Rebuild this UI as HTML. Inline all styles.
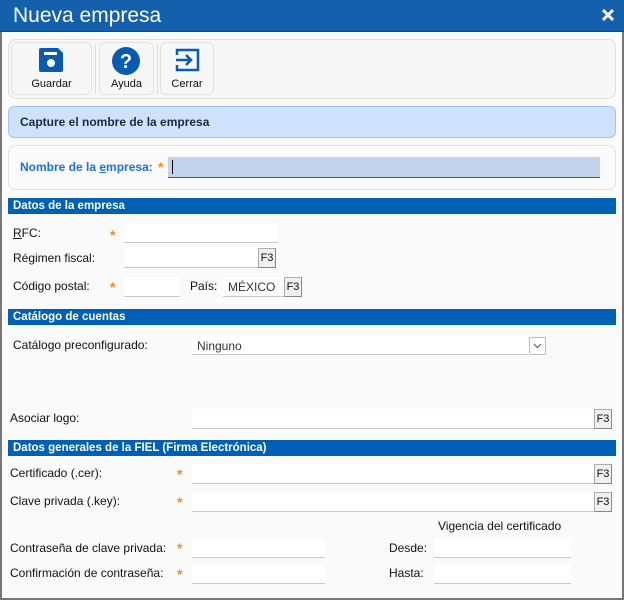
<!DOCTYPE html>
<html><head><meta charset="utf-8"><style>
*{box-sizing:border-box;margin:0;padding:0}
body{width:624px;height:600px;overflow:hidden;background:#fafafa;font-family:"Liberation Sans",Arial,sans-serif;font-size:12px;color:#111;position:relative}
.a{position:absolute}
.win{left:0;top:0;width:624px;height:600px;border:2px solid #777;border-top:none}
.title{left:0;top:0;width:624px;height:32px;background:#1560ad;border-bottom:1px solid #0c4b8c}
.lbl{position:absolute;font-size:12px;white-space:nowrap;line-height:14px}
.inp{position:absolute;background:#fff;border-bottom:1px solid #c8c8c8;height:20px}
.f3{position:absolute;width:18px;height:20px;background:#f0f0f0;border:1px solid #adadad;border-right-color:#888;border-bottom-color:#888;font-size:11px;text-align:center;line-height:18px}
.st{position:absolute;color:#f58a1f;font-size:14px;font-weight:bold;line-height:14px}
.hdr{position:absolute;left:8px;width:608px;height:16px;background:#0060b6;color:#fff;font-weight:bold;font-size:11.5px;line-height:16px;padding-left:5px}
.btn{position:absolute;top:42px;height:53px;border:1px solid #e2e2e2;border-radius:6px;background:#f7f7f7;text-align:center;font-size:11px}
.btn span{position:absolute;left:0;right:0;top:35px}
</style></head><body>
<div class="a win"></div>
<div class="a title"></div>
<div class="a" style="left:13px;top:4px;color:#fff;font-size:21px;line-height:24px">Nueva empresa</div>
<svg class="a" style="left:601px;top:8px" width="14" height="14" viewBox="0 0 14 14"><path d="M2 2L12 12M12 2L2 12" stroke="#fff" stroke-width="3"/></svg>

<div class="a" style="left:8px;top:39px;width:608px;height:60px;border:1px solid #e0e0e0;border-radius:8px;background:#f7f7f7"></div>
<div class="btn" style="left:11px;width:81px"><span>Guardar</span></div>
<div class="btn" style="left:99px;width:55px"><span>Ayuda</span></div>
<div class="btn" style="left:160px;width:54px"><span>Cerrar</span></div>
<div class="a" style="left:95px;top:44px;width:1px;height:50px;background:#ddd"></div>
<div class="a" style="left:157px;top:44px;width:1px;height:50px;background:#ddd"></div>
<svg class="a" style="left:38px;top:47px" width="26" height="26" viewBox="0 0 26 26"><path d="M3 1H20L25 6V23Q25 25 23 25H3Q1 25 1 23V3Q1 1 3 1Z" fill="#0a5bb0"/><rect x="6" y="5" width="13" height="3" fill="#fff"/><circle cx="13" cy="16" r="4" fill="#fff"/></svg>
<svg class="a" style="left:111px;top:46px" width="30" height="30" viewBox="0 0 30 30"><circle cx="15" cy="15" r="14" fill="#0a5bb0"/><text x="15" y="22" text-anchor="middle" fill="#fff" font-family="Liberation Sans" font-weight="bold" font-size="20">?</text></svg>
<svg class="a" style="left:175px;top:48px" width="25" height="24" viewBox="0 0 25 24"><path d="M2 7V2H23V22H2V17" stroke="#0a5bb0" stroke-width="2.5" fill="none"/><path d="M1 12H16M11 7L16 12L11 17" stroke="#0a5bb0" stroke-width="2.5" fill="none"/></svg>

<div class="a" style="left:8px;top:106px;width:608px;height:32px;background:#cfe2fd;border:1px solid #9ec3f7;border-radius:6px"></div>
<div class="lbl" style="left:20px;top:115px;font-weight:bold;color:#1a2a40">Capture el nombre de la empresa</div>

<div class="a" style="left:8px;top:145px;width:608px;height:45px;border:1px solid #e2e2e2;border-radius:8px;background:#fafafa"></div>
<div class="lbl" style="left:20px;top:160px;color:#1e6fe0;font-weight:bold">Nombre de la <u>e</u>mpresa:</div>
<div class="st" style="left:158px;top:160px">*</div>
<div class="a" style="left:168px;top:157px;width:432px;height:21px;background:#c2d2ec;border-bottom:1px solid #1560d0"></div>
<div class="a" style="left:172px;top:160px;width:1px;height:14px;background:#000"></div>

<div class="hdr" style="top:198px">Datos de la empresa</div>
<div class="lbl" style="left:13px;top:226px"><u>R</u>FC:</div>
<div class="st" style="left:110px;top:228px">*</div>
<div class="inp" style="left:124px;top:223px;width:154px"></div>
<div class="lbl" style="left:13px;top:251px">Régimen fiscal:</div>
<div class="inp" style="left:124px;top:248px;width:134px"></div>
<div class="f3" style="left:258px;top:248px">F3</div>
<div class="lbl" style="left:13px;top:279px">Código postal:</div>
<div class="st" style="left:110px;top:280px">*</div>
<div class="inp" style="left:124px;top:277px;width:56px"></div>
<div class="lbl" style="left:190px;top:279px">País:</div>
<div class="inp" style="left:223px;top:277px;width:61px"></div>
<div class="lbl" style="left:228px;top:280px;color:#333">MÉXICO</div>
<div class="f3" style="left:284px;top:277px">F3</div>

<div class="hdr" style="top:309px">Catálogo de cuentas</div>
<div class="lbl" style="left:13px;top:338px">Catálogo preconfigurado:</div>
<div class="inp" style="left:192px;top:335px;width:336px"></div>
<div class="lbl" style="left:197px;top:339px;color:#333">Ninguno</div>
<div class="a" style="left:529px;top:337px;width:17px;height:18px;background:#fff;border:1px solid #bbb;border-radius:2px"></div>
<svg class="a" style="left:533px;top:343px" width="9" height="6" viewBox="0 0 9 6"><path d="M1 1L4.5 4.5L8 1" stroke="#555" fill="none"/></svg>

<div class="lbl" style="left:10px;top:411px">Asociar logo:</div>
<div class="inp" style="left:192px;top:409px;width:402px"></div>
<div class="f3" style="left:594px;top:409px">F3</div>

<div class="hdr" style="top:440px">Datos generales de la FIEL (Firma Electrónica)</div>
<div class="lbl" style="left:10px;top:466px">Certificado (.cer):</div>
<div class="st" style="left:177px;top:467px">*</div>
<div class="inp" style="left:192px;top:464px;width:402px"></div>
<div class="f3" style="left:594px;top:464px">F3</div>
<div class="lbl" style="left:10px;top:494px">Clave privada (.key):</div>
<div class="st" style="left:177px;top:495px">*</div>
<div class="inp" style="left:192px;top:492px;width:402px"></div>
<div class="f3" style="left:594px;top:492px">F3</div>
<div class="lbl" style="left:438px;top:519px">Vigencia del certificado</div>
<div class="lbl" style="left:10px;top:541px">Contraseña de clave privada:</div>
<div class="st" style="left:177px;top:541px">*</div>
<div class="inp" style="left:192px;top:538px;width:133px"></div>
<div class="lbl" style="left:389px;top:541px">Desde:</div>
<div class="inp" style="left:434px;top:538px;width:137px"></div>
<div class="lbl" style="left:10px;top:566px">Confirmación de contraseña:</div>
<div class="st" style="left:177px;top:567px">*</div>
<div class="inp" style="left:192px;top:564px;width:133px"></div>
<div class="lbl" style="left:389px;top:566px">Hasta:</div>
<div class="inp" style="left:434px;top:564px;width:137px"></div>
</body></html>
